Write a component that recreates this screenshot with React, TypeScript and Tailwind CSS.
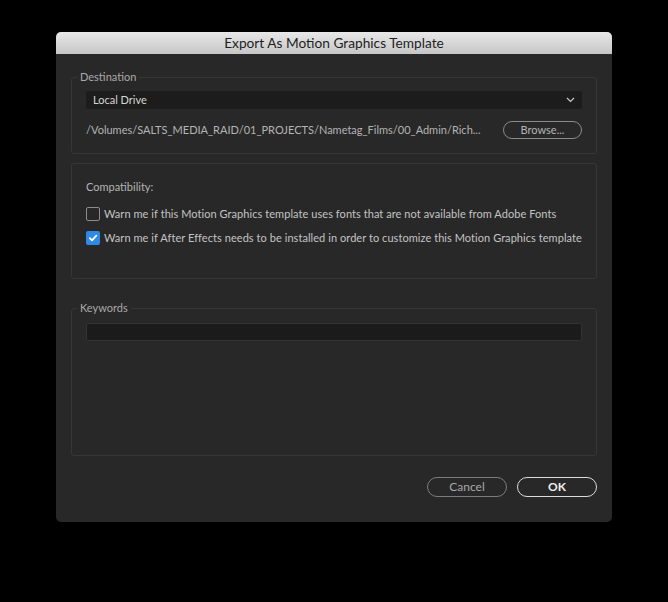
import React from "react";

const font = { fontFamily: "Lato, 'Open Sans', sans-serif" };

function GroupLabel({ children }: { children: React.ReactNode }) {
  return (
    <span className="absolute -top-[8px] left-[5px] bg-[#282828] px-[3px] text-[11px] leading-[14px] text-[#a8a8a8]">
      {children}
    </span>
  );
}

function Checkbox({ checked }: { checked?: boolean }) {
  if (checked) {
    return (
      <span className="flex h-[14px] w-[14px] shrink-0 items-center justify-center rounded-[2px] bg-[#2f8ae6]">
        <svg width="10" height="10" viewBox="0 0 10 10">
          <path d="M1.8 5.2 L4 7.4 L8.3 2.6" stroke="#fff" strokeWidth="1.7" fill="none" strokeLinecap="round" strokeLinejoin="round" />
        </svg>
      </span>
    );
  }
  return <span className="h-[14px] w-[14px] shrink-0 rounded-[2px] border-[1.5px] border-[#8c8c8c]" />;
}

export default function App() {
  return (
    <div className="min-h-[602px] w-[668px] bg-black pl-[56px] pt-[32px]" style={font}>
      <div className="flex h-[490px] w-[556px] flex-col overflow-hidden rounded-[5px] bg-[#282828]">
        <div className="flex h-[22px] shrink-0 items-center justify-center bg-gradient-to-b from-[#e8e8e8] to-[#c6c6c6] text-[13.7px] text-[#1e1e1e]">
          Export As Motion Graphics Template
        </div>
        <div className="flex flex-1 flex-col px-[15px] pt-[23px]">
          {/* Destination */}
          <div className="relative flex h-[77px] flex-col rounded-[3px] border border-[#363636] px-[14px] pt-[13px]">
            <GroupLabel>Destination</GroupLabel>
            <div className="flex h-[18px] items-center justify-between rounded-[2px] bg-[#1c1c1c] pl-[7px] pr-[7px] text-[11px] text-[#d6d6d6]">
              <span>Local Drive</span>
              <svg width="9" height="6" viewBox="0 0 9 6">
                <path d="M1 1 L4.5 4.5 L8 1" stroke="#c8c8c8" strokeWidth="1.2" fill="none" />
              </svg>
            </div>
            <div className="mt-[12px] flex h-[18px] items-center justify-between">
              <span className="text-[11px] text-[#b4b4b4]">/Volumes/SALTS_MEDIA_RAID/01_PROJECTS/Nametag_Films/00_Admin/Rich...</span>
              <button className="flex h-[18px] w-[79px] items-center justify-center rounded-full border-[1.5px] border-[#8a8a8a] text-[11px] text-[#b4b4b4]">
                Browse...
              </button>
            </div>
          </div>

          {/* Compatibility */}
          <div className="mt-[9px] flex h-[116px] flex-col rounded-[3px] border border-[#363636] px-[14px] pt-[16px]">
            <div className="text-[11px] leading-[14px] text-[#b4b4b4]">Compatibility:</div>
            <div className="mt-[13px] flex h-[14px] items-center gap-[4px] whitespace-nowrap text-[11px] leading-[14px] tracking-[0.06px] text-[#c4c4c4]">
              <Checkbox />
              <span>Warn me if this Motion Graphics template uses fonts that are not available from Adobe Fonts</span>
            </div>
            <div className="mt-[10px] flex h-[14px] items-center gap-[4px] whitespace-nowrap text-[11px] leading-[14px] tracking-[0.06px] text-[#c4c4c4]">
              <Checkbox checked />
              <span>Warn me if After Effects needs to be installed in order to customize this Motion Graphics template</span>
            </div>
          </div>

          {/* Keywords */}
          <div className="relative mt-[29px] h-[148px] rounded-[3px] border border-[#363636] px-[14px] pt-[14px]">
            <GroupLabel>Keywords</GroupLabel>
            <div className="h-[18px] rounded-[2px] border border-[#333] bg-[#1b1b1b]" />
          </div>

          <div className="mt-[21px] flex justify-end gap-[10px]">
            <button className="flex h-[20px] w-[80px] items-center justify-center rounded-full border-[1.5px] border-[#7c7c7c] text-[12px] text-[#a8a8a8]">
              Cancel
            </button>
            <button className="flex h-[20px] w-[80px] items-center justify-center rounded-full border-[1.5px] border-[#dcdcdc] text-[12px] font-bold text-[#f0f0f0]">
              OK
            </button>
          </div>
        </div>
      </div>
    </div>
  );
}
